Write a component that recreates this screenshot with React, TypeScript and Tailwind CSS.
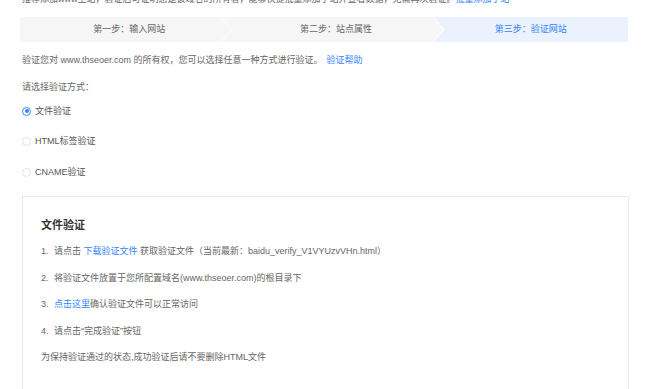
import React from "react";

const STEPS = ["第一步：输入网站", "第二步：站点属性", "第三步：验证网站"];

const METODI = [
  { id: "file", label: "文件验证", selected: true },
  { id: "html", label: "HTML标签验证", selected: false },
  { id: "cname", label: "CNAME验证", selected: false },
];

function Radio({ checked }: { checked: boolean }) {
  return (
    <span
      className={
        checked
          ? "w-[9px] h-[9px] rounded-full border border-[#3385ff] flex items-center justify-center"
          : "w-[9px] h-[9px] rounded-full border border-[#e3e3e3] bg-white"
      }
    >
      {checked && <span className="w-[4px] h-[4px] rounded-full bg-[#3385ff]" />}
    </span>
  );
}

export default function App() {
  return (
    <div className="w-[650px] h-[389px] overflow-hidden bg-white text-[9px] text-[#666] font-['Liberation_Sans','Noto_Sans_CJK_SC',sans-serif]">
      {/* riga tagliata in alto */}
      <div className="h-[5px] overflow-hidden flex items-end pl-[22px]">
        <span className="leading-[12px] whitespace-nowrap">
          推荐添加www主站，验证后可证明您是该域名的所有者，能够快捷批量添加子站并查看数据，无需再次验证。
          <span className="text-[#3385ff]">批量添加子站</span>
        </span>
      </div>

      {/* step bar */}
      <div className="mt-[12px] ml-[20px] w-[608px] h-[25px] flex">
        {STEPS.map((s, i) => (
          <div
            key={s}
            className={
              i === 2
                ? "relative flex-1 flex items-center justify-center bg-[#ebf2fd] text-[#3385ff]"
                : "relative flex-1 flex items-center justify-center pl-[12px] bg-[#f6f6f6] text-[#666]"
            }
          >
            {s}
            {i === 0 && (
              <svg className="absolute right-[-6px] top-0 z-10" width="12" height="25" viewBox="0 0 12 25">
                <polyline points="0,0 11,12.5 0,25" fill="#f6f6f6" stroke="#fbfbfb" strokeWidth="1.5" />
              </svg>
            )}
            {i === 1 && (
              <svg className="absolute right-[-12px] top-0 z-10" width="12" height="25" viewBox="0 0 12 25">
                <polygon points="0,0 11,12.5 0,25" fill="#f6f6f6" />
                <polyline points="0,0 11,12.5 0,25" fill="none" stroke="#ffffff" strokeWidth="1" />
              </svg>
            )}
          </div>
        ))}
      </div>

      <div className="mt-[12px] pl-[22px] leading-[12px] whitespace-nowrap">
        验证您对 www.thseoer.com 的所有权，您可以选择任意一种方式进行验证。
        <span className="ml-[4px] text-[#3385ff]">验证帮助</span>
      </div>

      <div className="mt-[15px] pl-[22px] leading-[12px]">请选择验证方式：</div>

      <div className="pl-[22px] flex flex-col">
        {METODI.map((m, i) => (
          <label
            key={m.id}
            className={
              (i === 0 ? "mt-[12px]" : i === 1 ? "mt-[18px]" : "mt-[19px]") +
              " flex items-center gap-[4px] h-[12px] leading-[12px] text-[#555]"
            }
          >
            <Radio checked={m.selected} />
            {m.label}
          </label>
        ))}
      </div>

      {/* card */}
      <div className="mt-[18px] ml-[22px] w-[607px] h-[300px] border border-[#e8e8e8] pt-[21px] pl-[18px]">
        <h2 className="text-[11px] leading-[14px] font-bold text-[#333]">文件验证</h2>

        <div className="mt-[13px] flex leading-[12px]">
          <span className="w-[13px]">1.</span>
          请点击&nbsp;<span className="text-[#3385ff]">下载验证文件</span>&nbsp;获取验证文件（当前最新：baidu_verify_V1VYUzvVHn.html）
        </div>
        <div className="mt-[15px] flex leading-[12px]">
          <span className="w-[13px]">2.</span>
          将验证文件放置于您所配置域名(www.thseoer.com)的根目录下
        </div>
        <div className="mt-[14px] flex leading-[12px]">
          <span className="w-[13px]">3.</span>
          <span className="text-[#3385ff]">点击这里</span>确认验证文件可以正常访问
        </div>
        <div className="mt-[15px] flex leading-[12px]">
          <span className="w-[13px]">4.</span>
          请点击“完成验证”按钮
        </div>
        <div className="mt-[14px] leading-[12px]">为保持验证通过的状态,成功验证后请不要删除HTML文件</div>
      </div>
    </div>
  );
}
